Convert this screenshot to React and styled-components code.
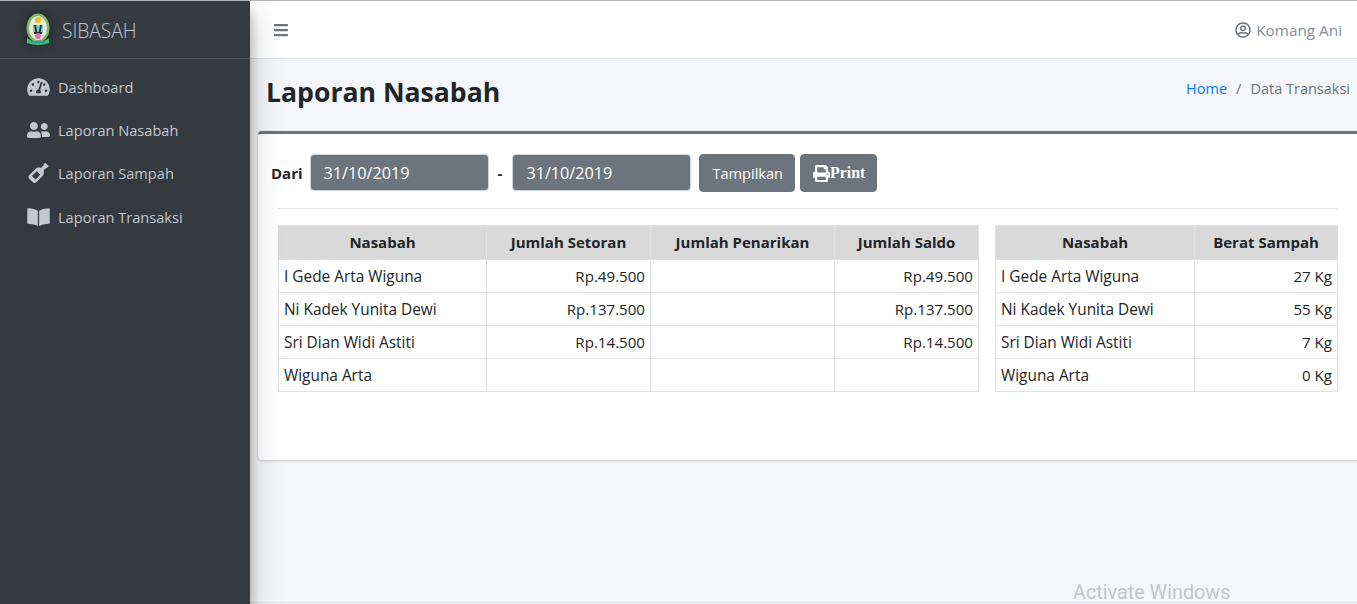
import React from 'react'
import styled, { createGlobalStyle } from 'styled-components'
import { FaTachometerAlt, FaUserFriends, FaWineBottle, FaBookOpen, FaBars, FaPrint, FaRegUserCircle } from 'react-icons/fa'

const GlobalStyle = createGlobalStyle`
  html, body { margin: 0; padding: 0; height: 100%; overflow: hidden; }
  body {
    font-family: "Open Sans", "Noto Sans", sans-serif;
    font-size: 15px;
    color: #212529;
    background: #f4f6f9;
  }
  * { box-sizing: border-box; }
`

const Page = styled.div`
  position: relative;
  display: flex;
  width: 1357px;
  height: 604px;
  border-top: 1px solid #b5b5b5;
  overflow: hidden;
  background: #f4f6f9;
`

const Sidebar = styled.aside`
  width: 250px;
  flex: none;
  background: #343a40;
  box-shadow: 0 14px 28px rgba(0, 0, 0, 0.25), 0 10px 10px rgba(0, 0, 0, 0.22);
  z-index: 2;
`

const Brand = styled.div`
  display: flex;
  align-items: center;
  gap: 11px;
  height: 58px;
  padding: 0 0 0 25px;
  border-bottom: 1px solid #4b545c;
  color: #c2c7d0;
  font-size: 19.2px;
  font-weight: 300;
`

const BrandName = styled.span`
  padding-top: 2px;
`

const NavList = styled.nav`
  display: flex;
  flex-direction: column;
  padding-top: 6px;
`

const NavItem = styled.a`
  display: flex;
  align-items: center;
  height: 43.3px;
  padding-left: 27px;
  color: #c2c7d0;
  font-size: 14.6px;

  svg {
    width: 23px;
    font-size: 20px;
    margin-right: 8px;
    flex: none;
  }
`

const Main = styled.main`
  flex: 1;
  min-width: 0;
  display: flex;
  flex-direction: column;
  border-bottom: 1px solid #dee2e6;
  margin-bottom: 1px;
`

const Topbar = styled.header`
  display: flex;
  align-items: center;
  justify-content: space-between;
  height: 58px;
  padding: 0 15px 0 23px;
  background: #fff;
  border-bottom: 1px solid #dee2e6;
  color: #6c757d;
`

const MenuButton = styled.span`
  display: flex;
  font-size: 16px;
`

const UserLink = styled.span`
  display: flex;
  align-items: center;
  gap: 5px;
  font-size: 15.3px;
  color: #868e96;

  svg {
    font-size: 16px;
    color: #6c757d;
  }
`

const PageHead = styled.div`
  display: flex;
  align-items: flex-start;
  justify-content: space-between;
  height: 72px;
  padding: 14px 7px 0 16px;
`

const Title = styled.h1`
  margin: 0;
  font-size: 26.6px;
  line-height: 38px;
  font-weight: 700;
  color: #212529;
`

const Crumbs = styled.div`
  display: flex;
  gap: 9px;
  padding-top: 5px;
  font-size: 14.5px;
  line-height: 22px;
  color: #6c757d;

  a { color: #007bff; }
`

const Card = styled.section`
  height: 329px;
  margin-left: 8px;
  margin-right: -10px;
  padding: 20px 29px 0 13px;
  background: #fff;
  border-top: 3px solid #6c757d;
  border-radius: 4px;
  box-shadow: 0 0 1px rgba(0, 0, 0, 0.125), 0 1px 3px rgba(0, 0, 0, 0.2);
`

const FilterRow = styled.form`
  display: flex;
  align-items: flex-start;
  height: 38px;
`

const FilterLabel = styled.label`
  align-self: center;
  margin: 0 ${p => p.$right}px 0 ${p => p.$left}px;
  font-weight: 700;
  font-size: 15px;
`

const DateInput = styled.div`
  display: flex;
  align-items: center;
  width: 179px;
  height: 37px;
  padding-left: 13px;
  background: #6c757d;
  border: 1px solid #ced4da;
  border-radius: 4px;
  color: #fff;
  font-size: 16.2px;
`

const Button = styled.button`
  display: flex;
  align-items: center;
  height: 38px;
  margin-left: ${p => p.$left}px;
  padding: 0 11px 0 12px;
  background: #6c757d;
  border: 1px solid #6c757d;
  border-radius: 4px;
  color: #fff;
  font-family: ${p => (p.$serif ? '"Liberation Serif", serif' : 'inherit')};
  font-weight: ${p => (p.$serif ? 700 : 400)};
  font-size: ${p => (p.$serif ? '15.8px' : '14.6px')};

  svg { font-size: 17px; }
`

const Divider = styled.hr`
  margin: 16px 0 16px 7px;
  border: 0;
  border-top: 1px solid #e5e7ea;
`

const Tables = styled.div`
  display: flex;
  gap: 16px;
  padding-left: 7px;
`

const Table = styled.table`
  table-layout: fixed;
  width: ${p => p.$width}px;
  border-collapse: collapse;
  font-size: 15.4px;
`

const HeadCell = styled.th`
  height: 34px;
  padding: 0 5px 2px;
  background: #d9d9d9;
  border: 1px solid #e0e0e0;
  font-size: 15px;
  font-weight: 700;
  text-align: center;
`

const Cell = styled.td`
  height: 33px;
  padding: 0 5px;
  border: 1px solid #dee2e6;
  font-size: ${p => (p.$right ? '15.1px' : 'inherit')};
  text-align: ${p => (p.$right ? 'right' : 'left')};
`

const Watermark = styled.div`
  position: absolute;
  left: 1073px;
  top: 582px;
  font-family: Roboto, sans-serif;
  font-size: 19.8px;
  line-height: 20px;
  color: #c4c6c9;
`

const LogoMark = styled.svg`
  flex: none;
  filter: drop-shadow(0 0 5px rgba(0, 0, 0, 0.45));
`

// small drawing of the crest used as the logo
const Logo = () => (
  <LogoMark width="26" height="34" viewBox="0 0 26 34">
    <ellipse cx="13" cy="15" rx="11.5" ry="14.5" fill="#7fb56b" />
    <ellipse cx="13" cy="15" rx="9" ry="12" fill="#e8ecd2" />
    <circle cx="13" cy="7" r="3.2" fill="#e3c53a" />
    <path d="M8 12h10v8H8z" fill="#6fd3d8" />
    <path d="M10 12l1.5 8M16 12l-1.5 8M9 20h8" stroke="#2c2c20" strokeWidth="1.8" fill="none" />
    <circle cx="13" cy="23" r="3" fill="#dd6fc0" />
    <path d="M2 25q11 8 22 0v5q-11 4-22 0z" fill="#35c46a" />
    <path d="M6 29h14" stroke="#2a8fb0" strokeWidth="1.5" />
  </LogoMark>
)

const setoran = [
  ['I Gede Arta Wiguna', 'Rp.49.500', '', 'Rp.49.500'],
  ['Ni Kadek Yunita Dewi', 'Rp.137.500', '', 'Rp.137.500'],
  ['Sri Dian Widi Astiti', 'Rp.14.500', '', 'Rp.14.500'],
  ['Wiguna Arta', '', '', ''],
]

const berat = [
  ['I Gede Arta Wiguna', '27 Kg'],
  ['Ni Kadek Yunita Dewi', '55 Kg'],
  ['Sri Dian Widi Astiti', '7 Kg'],
  ['Wiguna Arta', '0 Kg'],
]

function DataTable({ width, cols, heads, rows }) {
  return (
    <Table $width={width}>
      <colgroup>
        {cols.map((c, i) => <col key={i} width={c} />)}
      </colgroup>
      <thead>
        <tr>{heads.map(h => <HeadCell key={h}>{h}</HeadCell>)}</tr>
      </thead>
      <tbody>
        {rows.map(r => (
          <tr key={r[0]}>
            {r.map((v, i) => <Cell key={i} $right={i > 0}>{v}</Cell>)}
          </tr>
        ))}
      </tbody>
    </Table>
  )
}

export default function App() {
  return (
    <Page>
      <GlobalStyle />
      <Sidebar>
        <Brand><Logo /><BrandName>SIBASAH</BrandName></Brand>
        <NavList>
          <NavItem><FaTachometerAlt />Dashboard</NavItem>
          <NavItem><FaUserFriends />Laporan Nasabah</NavItem>
          <NavItem><FaWineBottle />Laporan Sampah</NavItem>
          <NavItem><FaBookOpen />Laporan Transaksi</NavItem>
        </NavList>
      </Sidebar>
      <Main>
        <Topbar>
          <MenuButton><FaBars /></MenuButton>
          <UserLink><FaRegUserCircle />Komang Ani</UserLink>
        </Topbar>
        <PageHead>
          <Title>Laporan Nasabah</Title>
          <Crumbs><a>Home</a><span>/</span><span>Data Transaksi</span></Crumbs>
        </PageHead>
        <Card>
          <FilterRow>
            <FilterLabel $left={0} $right={7}>Dari</FilterLabel>
            <DateInput>31/10/2019</DateInput>
            <FilterLabel as="span" $left={9} $right={10}>-</FilterLabel>
            <DateInput>31/10/2019</DateInput>
            <Button type="button" $left={8}>Tampilkan</Button>
            <Button type="button" $left={5} $serif><FaPrint />Print</Button>
          </FilterRow>
          <Divider />
          <Tables>
            <DataTable
              width={700}
              cols={[208, 164, 184, 144]}
              heads={['Nasabah', 'Jumlah Setoran', 'Jumlah Penarikan', 'Jumlah Saldo']}
              rows={setoran}
            />
            <DataTable
              width={342}
              cols={[199, 143]}
              heads={['Nasabah', 'Berat Sampah']}
              rows={berat}
            />
          </Tables>
        </Card>
      </Main>
      <Watermark>Activate Windows</Watermark>
    </Page>
  )
}
